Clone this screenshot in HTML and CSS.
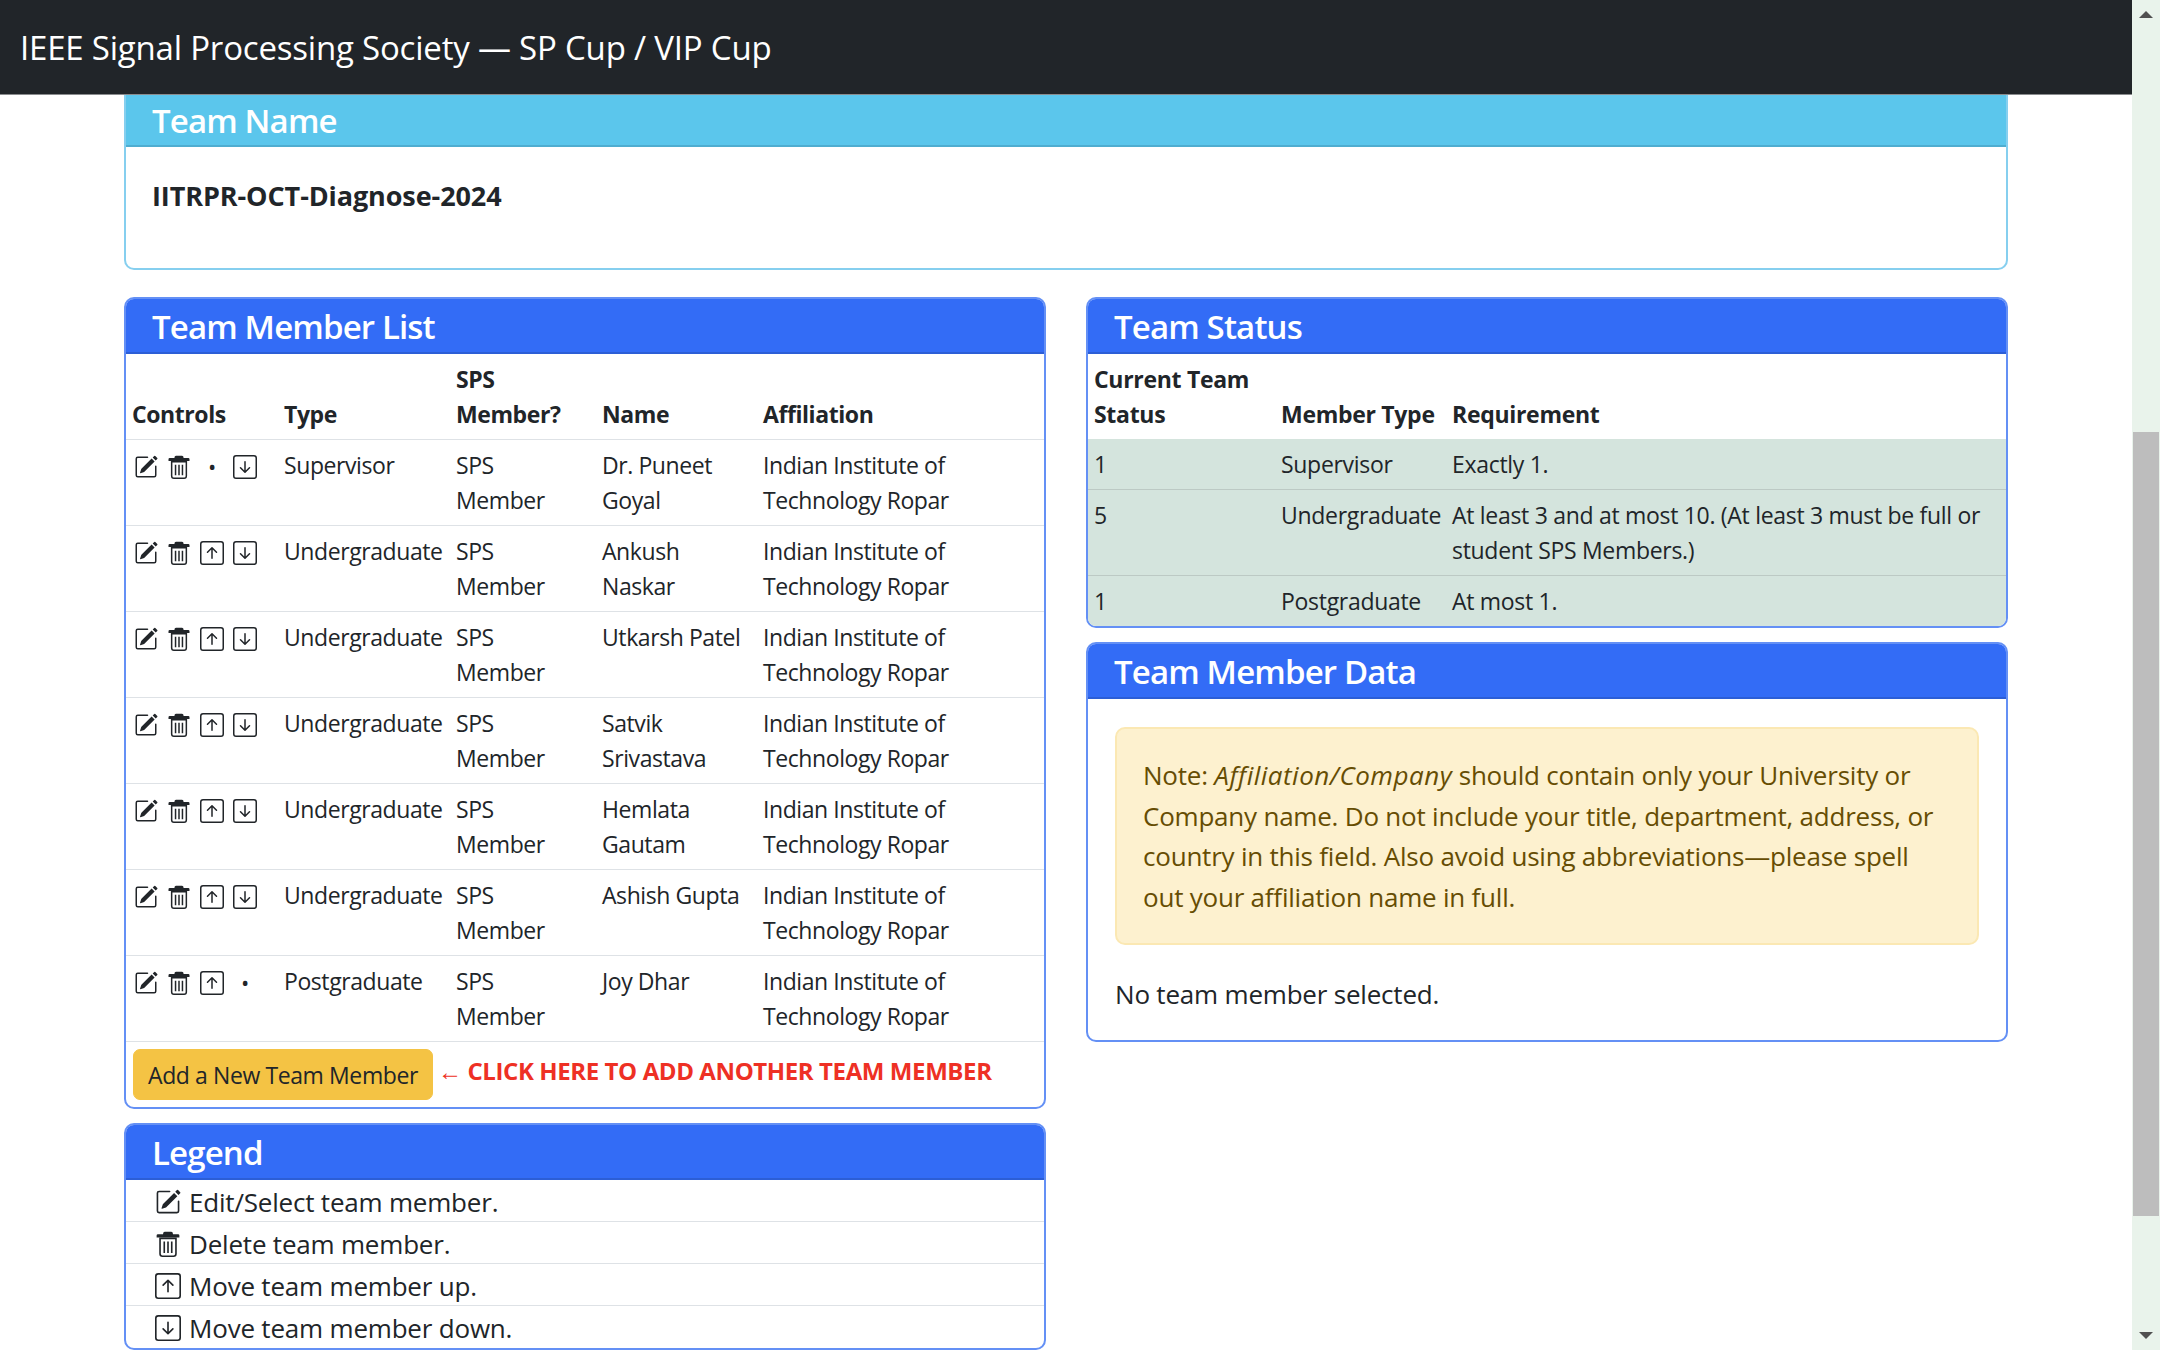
FILE: index.html
```html
<!DOCTYPE html>
<html lang="en">
<head>
<meta charset="utf-8">
<title>SP Cup / VIP Cup</title>
<link rel="stylesheet" href="styles.css">
</head>
<body>
<svg class="defs" width="0" height="0" aria-hidden="true">
  <symbol id="i-edit" viewBox="0 0 16 16">
    <path d="M15.502 1.94a.5.5 0 0 1 0 .706L14.459 3.69l-2-2L13.502.646a.5.5 0 0 1 .707 0l1.293 1.293zm-1.75 2.456-2-2L4.939 9.21a.5.5 0 0 0-.121.196l-.805 2.414a.25.25 0 0 0 .316.316l2.414-.805a.5.5 0 0 0 .196-.12l6.813-6.814z"/>
    <path fill-rule="evenodd" d="M1 13.5A1.5 1.5 0 0 0 2.5 15h11a1.5 1.5 0 0 0 1.5-1.5v-6a.5.5 0 0 0-1 0v6a.5.5 0 0 1-.5.5h-11a.5.5 0 0 1-.5-.5v-11a.5.5 0 0 1 .5-.5H9a.5.5 0 0 0 0-1H2.5A1.5 1.5 0 0 0 1 2.5v11z"/>
  </symbol>
  <symbol id="i-trash" viewBox="0 0 16 16">
    <path d="M6 .5h4a1 1 0 0 1 1 1V2h3.2a.8.8 0 0 1 .8.8V4H1V2.8a.8.8 0 0 1 .8-.8H5v-.5a1 1 0 0 1 1-1z"/>
    <path fill-rule="evenodd" d="M2.600 4h10.800v10a2 2 0 0 1-2 2H4.600a2 2 0 0 1-2-2V4zm1 1v9a1 1 0 0 0 1 1h6.800a1 1 0 0 0 1-1V5H3.600z"/>
    <path d="M5.200 6.500h1v7h-1zM7.500 6.500h1v7h-1zM9.800 6.500h1v7h-1z"/>
  </symbol>
  <symbol id="i-up" viewBox="0 0 16 16">
    <path fill-rule="evenodd" d="M15 2a1 1 0 0 0-1-1H2a1 1 0 0 0-1 1v12a1 1 0 0 0 1 1h12a1 1 0 0 0 1-1V2zM0 2a2 2 0 0 1 2-2h12a2 2 0 0 1 2 2v12a2 2 0 0 1-2 2H2a2 2 0 0 1-2-2V2zm8.500 9.500a.5.5 0 0 1-1 0V5.707L5.354 7.854a.5.5 0 1 1-.708-.708l3-3a.5.5 0 0 1 .708 0l3 3a.5.5 0 0 1-.708.708L8.500 5.707V11.500z"/>
  </symbol>
  <symbol id="i-down" viewBox="0 0 16 16">
    <path fill-rule="evenodd" d="M15 2a1 1 0 0 0-1-1H2a1 1 0 0 0-1 1v12a1 1 0 0 0 1 1h12a1 1 0 0 0 1-1V2zM0 2a2 2 0 0 1 2-2h12a2 2 0 0 1 2 2v12a2 2 0 0 1-2 2H2a2 2 0 0 1-2-2V2zm8.500 2.500a.5.5 0 0 0-1 0v5.793L5.354 8.146a.5.5 0 1 0-.708.708l3 3a.5.5 0 0 0 .708 0l3-3a.5.5 0 0 0-.708-.708L8.500 10.293V4.500z"/>
  </symbol>
</svg>
<div class="window">
  <div class="viewport">
    <nav class="navbar">IEEE Signal Processing Society — SP Cup / VIP Cup</nav>
    <main class="container">
      <section class="card card-info team-name">
        <h2 class="card-header header-info">Team Name</h2>
        <div class="team-name-body"><strong>IITRPR-OCT-Diagnose-2024</strong></div>
      </section>
      <div class="columns">
        <div class="column">
          <section class="card card-primary">
            <h2 class="card-header">Team Member List</h2>
            <table class="table members">
              <thead>
                <tr><th class="c-controls">Controls</th><th class="c-type">Type</th><th class="c-sps">SPS Member?</th><th class="c-name">Name</th><th>Affiliation</th></tr>
              </thead>
              <tbody>
                <tr>
                  <td><div class="controls"><svg class="ic"><use href="#i-edit"/></svg><svg class="ic"><use href="#i-trash"/></svg><span class="dot">•</span><svg class="ic"><use href="#i-down"/></svg></div></td>
                  <td>Supervisor</td><td class="c-sps">SPS Member</td><td>Dr. Puneet Goyal</td><td>Indian Institute of Technology Ropar</td>
                </tr>
                <tr>
                  <td><div class="controls"><svg class="ic"><use href="#i-edit"/></svg><svg class="ic"><use href="#i-trash"/></svg><svg class="ic"><use href="#i-up"/></svg><svg class="ic"><use href="#i-down"/></svg></div></td>
                  <td>Undergraduate</td><td class="c-sps">SPS Member</td><td>Ankush Naskar</td><td>Indian Institute of Technology Ropar</td>
                </tr>
                <tr>
                  <td><div class="controls"><svg class="ic"><use href="#i-edit"/></svg><svg class="ic"><use href="#i-trash"/></svg><svg class="ic"><use href="#i-up"/></svg><svg class="ic"><use href="#i-down"/></svg></div></td>
                  <td>Undergraduate</td><td class="c-sps">SPS Member</td><td>Utkarsh Patel</td><td>Indian Institute of Technology Ropar</td>
                </tr>
                <tr>
                  <td><div class="controls"><svg class="ic"><use href="#i-edit"/></svg><svg class="ic"><use href="#i-trash"/></svg><svg class="ic"><use href="#i-up"/></svg><svg class="ic"><use href="#i-down"/></svg></div></td>
                  <td>Undergraduate</td><td class="c-sps">SPS Member</td><td>Satvik Srivastava</td><td>Indian Institute of Technology Ropar</td>
                </tr>
                <tr>
                  <td><div class="controls"><svg class="ic"><use href="#i-edit"/></svg><svg class="ic"><use href="#i-trash"/></svg><svg class="ic"><use href="#i-up"/></svg><svg class="ic"><use href="#i-down"/></svg></div></td>
                  <td>Undergraduate</td><td class="c-sps">SPS Member</td><td>Hemlata Gautam</td><td>Indian Institute of Technology Ropar</td>
                </tr>
                <tr>
                  <td><div class="controls"><svg class="ic"><use href="#i-edit"/></svg><svg class="ic"><use href="#i-trash"/></svg><svg class="ic"><use href="#i-up"/></svg><svg class="ic"><use href="#i-down"/></svg></div></td>
                  <td>Undergraduate</td><td class="c-sps">SPS Member</td><td>Ashish Gupta</td><td>Indian Institute of Technology Ropar</td>
                </tr>
                <tr>
                  <td><div class="controls"><svg class="ic"><use href="#i-edit"/></svg><svg class="ic"><use href="#i-trash"/></svg><svg class="ic"><use href="#i-up"/></svg><span class="dot">•</span></div></td>
                  <td>Postgraduate</td><td class="c-sps">SPS Member</td><td>Joy Dhar</td><td>Indian Institute of Technology Ropar</td>
                </tr>
              </tbody>
            </table>
            <div class="add-row">
              <button class="btn-add" type="button">Add a New Team Member</button>
              <span class="add-hint"><span class="arrow">←</span> CLICK HERE TO ADD ANOTHER TEAM MEMBER</span>
            </div>
          </section>
          <section class="card card-primary">
            <h2 class="card-header">Legend</h2>
            <ul class="legend">
              <li><svg class="ic ic-legend"><use href="#i-edit"/></svg>Edit/Select team member.</li>
              <li><svg class="ic ic-legend"><use href="#i-trash"/></svg>Delete team member.</li>
              <li><svg class="ic ic-legend"><use href="#i-up"/></svg>Move team member up.</li>
              <li><svg class="ic ic-legend"><use href="#i-down"/></svg>Move team member down.</li>
            </ul>
          </section>
        </div>
        <div class="column">
          <section class="card card-primary">
            <h2 class="card-header">Team Status</h2>
            <table class="table status">
              <thead>
                <tr><th class="s-status">Current Team Status</th><th class="s-type">Member Type</th><th>Requirement</th></tr>
              </thead>
              <tbody>
                <tr><td>1</td><td>Supervisor</td><td>Exactly 1.</td></tr>
                <tr><td>5</td><td>Undergraduate</td><td>At least 3 and at most 10. (At least 3 must be full or student SPS Members.)</td></tr>
                <tr><td>1</td><td>Postgraduate</td><td>At most 1.</td></tr>
              </tbody>
            </table>
          </section>
          <section class="card card-primary">
            <h2 class="card-header">Team Member Data</h2>
            <div class="data-body">
              <div class="alert">Note: <em>Affiliation/Company</em> should contain only your University or Company name. Do not include your title, department, address, or country in this field. Also avoid using abbreviations—please spell out your affiliation name in full.</div>
              <p class="none">No team member selected.</p>
            </div>
          </section>
        </div>
      </div>
    </main>
  </div>
  <div class="scrollbar">
    <span class="sb-arrow sb-up"></span>
    <div class="sb-track"><div class="sb-thumb"></div></div>
    <span class="sb-arrow sb-down"></span>
  </div>
</div>
</body>
</html>
```
FILE: styles.css
```css
* { box-sizing: border-box; }
html, body { margin: 0; height: 100%; overflow: hidden; }
body { font-family: "Open Sans", "Noto Sans", "Liberation Sans", sans-serif; color: #212529; background: #fff; font-size: 22px; }
.defs { position: absolute; }
.window { display: flex; height: 1350px; }
.viewport { width: 2132px; height: 1350px; overflow: hidden; }
.navbar { height: 95px; background: #212529; border-bottom: 1px solid #8a8c8e; color: #fff; font-size: 33px; line-height: 96px; padding-left: 20px; letter-spacing: -0.2px; }
.container { padding: 0 124px; }
.card { border: 2px solid #3369f5; border-radius: 10px; background: #fff; overflow: hidden; }
.card-primary { border-color: #6490f5; }
.card-info { border-color: #86cfef; }
.card-header { margin: 0; background: #336cf6; color: #fff; font-size: 33px; font-weight: 600; line-height: 56px; height: 55px; padding-left: 26px; border-bottom: 2px solid #2c5ed6; letter-spacing: -0.85px; }
.header-info { background: #5bc6ec; border-bottom-color: #4fadd0; height: 52px; line-height: 52px; }
.team-name { border-top: 0; border-radius: 0 0 10px 10px; height: 175px; }
.team-name-body { padding: 29px 26px; font-size: 27px; line-height: 40px; letter-spacing: -0.1px; }
.columns { display: grid; grid-template-columns: 922px 922px; column-gap: 40px; margin-top: 27px; }
.column { display: flex; flex-direction: column; gap: 14px; }
.table { width: 100%; border-collapse: collapse; font-size: 23px; line-height: 35px; letter-spacing: -0.42px; table-layout: fixed; }
.table th { font-weight: 700; text-align: left; vertical-align: bottom; padding: 8px 6px 7px; }
.table td { vertical-align: top; padding: 8px 6px 7px; }
.members thead tr, .members tbody tr { border-bottom: 1px solid #dee2e6; }
.c-controls { width: 152px; }
.c-type { width: 172px; }
.table .c-sps { width: 146px; padding-right: 30px; }
.c-name { width: 161px; }
.controls { display: flex; gap: 9px; align-items: center; height: 35px; padding-left: 2px; padding-top: 2px; }
.ic { width: 24px; height: 24px; fill: #212529; flex: none; }
.dot { width: 24px; text-align: center; font-size: 22px; }
.add-row { display: flex; align-items: flex-start; gap: 5px; padding: 7px 6px 7px 7px; }
.btn-add { background: #f4c344; border: 1px solid #f4c344; border-radius: 7px; height: 51px; padding: 0 14px; font: inherit; font-size: 23px; letter-spacing: -0.4px; color: #212529; }
.add-hint { color: #ee3024; font-weight: 700; font-size: 24px; line-height: 44px; letter-spacing: -0.4px; }
.arrow { font-weight: 400; }
.legend { list-style: none; margin: 0; padding: 0; font-size: 26px; letter-spacing: -0.2px; }
.legend li { height: 42px; line-height: 40px; padding: 2px 0 0 29px; border-bottom: 1px solid #dee2e6; display: flex; align-items: center; gap: 8px; }
.legend li:last-child { border-bottom: 0; }
.ic-legend { width: 26px; height: 26px; }
.status { letter-spacing: -0.3px; }
.status tbody tr { background: #d4e4dd; border-top: 1px solid #bcc9c4; }
.status tbody tr:first-child { border-top: 0; }
.s-status { width: 187px; }
.s-type { width: 171px; }
.data-body { padding: 28px 27px 26px; }
.alert { background: #fdf1cf; border: 2px solid #fbe8b3; border-radius: 10px; color: #664d03; font-size: 26px; line-height: 40.500px; padding: 26px; letter-spacing: -0.22px; }
.alert em { letter-spacing: 0.5px; }
.none { margin: 29px 0 0; font-size: 26px; line-height: 40px; letter-spacing: -0.2px; }
.scrollbar { width: 28px; height: 1350px; background: #e9f3eb; display: flex; flex-direction: column; align-items: center; }
.sb-arrow { width: 0; height: 0; border-left: 7px solid transparent; border-right: 7px solid transparent; flex: none; }
.sb-up { border-bottom: 7px solid #505050; margin: 11px 0 10px; }
.sb-down { border-top: 7px solid #505050; margin: 10px 0 11px; }
.sb-track { flex: 1; width: 100%; padding-top: 404px; }
.sb-thumb { height: 784px; margin: 0 1px; background: #bdbdbd; }
```
